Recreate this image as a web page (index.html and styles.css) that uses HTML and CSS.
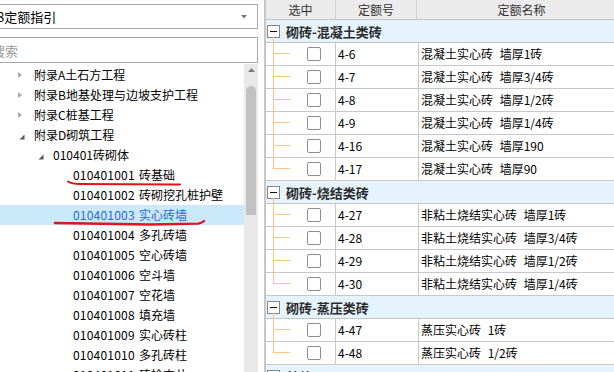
FILE: index.html
```html
<!DOCTYPE html>
<html lang="zh-CN">
<head>
    <meta charset="UTF-8">
    <meta name="viewport" content="width=device-width, initial-scale=1.0">
    <link rel="stylesheet" href="styles.css">
    <title>定额指引</title>
</head>
<body>
<div class="app">
    <aside class="guide">
        <div class="select">
            <span>8定额指引</span>
            <svg class="caret" width="6" height="4" viewBox="0 0 6 4"><path d="M0 0H6L3 3.5Z" fill="#777"/></svg>
        </div>
        <div class="search"><span>搜索</span></div>

        <div class="tree-wrap">
            <ul class="tree">
                <li class="node lv1"><span class="tg"><svg width="6" height="8" viewBox="0 0 6 8"><path d="M1 1L5 4L1 7Z" fill="#a9a9a9"/></svg></span>附录A土石方工程</li>
                <li class="node lv1"><span class="tg"><svg width="6" height="8" viewBox="0 0 6 8"><path d="M1 1L5 4L1 7Z" fill="#a9a9a9"/></svg></span>附录B地基处理与边坡支护工程</li>
                <li class="node lv1"><span class="tg"><svg width="6" height="8" viewBox="0 0 6 8"><path d="M1 1L5 4L1 7Z" fill="#a9a9a9"/></svg></span>附录C桩基工程</li>
                <li class="node lv1"><span class="tg open"><svg width="6" height="6" viewBox="0 0 6 6"><path d="M5.5 0.5V5.5H0.5Z" fill="#595959"/></svg></span>附录D砌筑工程</li>
                <li class="node lv2"><span class="tg open"><svg width="6" height="6" viewBox="0 0 6 6"><path d="M5.5 0.5V5.5H0.5Z" fill="#595959"/></svg></span>010401砖砌体</li>
                <li class="node lv3"><span class="code">010401001</span>砖基础</li>
                <li class="node lv3"><span class="code">010401002</span>砖砌挖孔桩护壁</li>
                <li class="node lv3 active"><span class="code">010401003</span>实心砖墙</li>
                <li class="node lv3"><span class="code">010401004</span>多孔砖墙</li>
                <li class="node lv3"><span class="code">010401005</span>空心砖墙</li>
                <li class="node lv3"><span class="code">010401006</span>空斗墙</li>
                <li class="node lv3"><span class="code">010401007</span>空花墙</li>
                <li class="node lv3"><span class="code">010401008</span>填充墙</li>
                <li class="node lv3"><span class="code">010401009</span>实心砖柱</li>
                <li class="node lv3"><span class="code">010401010</span>多孔砖柱</li>
                <li class="node lv3"><span class="code">010401011</span>砖检查井</li>
                <li class="node lv3"><span class="code">010401012</span>零星砌砖</li>
            </ul>
            <div class="vscroll">
                <svg class="up" width="7" height="4" viewBox="0 0 7 4"><path d="M3.5 0L7 4H0Z" fill="#7a7a7a"/></svg>
                <div class="thumb"></div>
            </div>
            <!-- hand drawn red marks -->
            <svg class="marks" width="258" height="308" viewBox="0 64 258 308">
                <path d="M68 181.5Q72 184 80 184L180 184.5" fill="none" stroke="#e5121b" stroke-width="2" stroke-linecap="round"/>
                <path d="M55 223L150 224.5L198 223.6Q202 223 204 221" fill="none" stroke="#e5121b" stroke-width="2.4" stroke-linecap="round"/>
            </svg>
        </div>
    </aside>

    <section class="quota">
        <div class="grid-head">
            <div class="c-pick">选中</div>
            <div class="c-no">定额号</div>
            <div class="c-name">定额名称</div>
        </div>

        <div class="group"><span class="minus"></span>砌砖-混凝土类砖</div>
        <div class="row"><div class="c-pick"><span class="chk"></span></div><div class="c-no">4-6</div><div class="c-name">混凝土实心砖 墙厚1砖</div></div>
        <div class="row"><div class="c-pick"><span class="chk"></span></div><div class="c-no">4-7</div><div class="c-name">混凝土实心砖 墙厚3/4砖</div></div>
        <div class="row"><div class="c-pick"><span class="chk"></span></div><div class="c-no">4-8</div><div class="c-name">混凝土实心砖 墙厚1/2砖</div></div>
        <div class="row"><div class="c-pick"><span class="chk"></span></div><div class="c-no">4-9</div><div class="c-name">混凝土实心砖 墙厚1/4砖</div></div>
        <div class="row"><div class="c-pick"><span class="chk"></span></div><div class="c-no">4-16</div><div class="c-name">混凝土实心砖 墙厚190</div></div>
        <div class="row last"><div class="c-pick"><span class="chk"></span></div><div class="c-no">4-17</div><div class="c-name">混凝土实心砖 墙厚90</div></div>

        <div class="group"><span class="minus"></span>砌砖-烧结类砖</div>
        <div class="row"><div class="c-pick"><span class="chk"></span></div><div class="c-no">4-27</div><div class="c-name">非粘土烧结实心砖 墙厚1砖</div></div>
        <div class="row"><div class="c-pick"><span class="chk"></span></div><div class="c-no">4-28</div><div class="c-name">非粘土烧结实心砖 墙厚3/4砖</div></div>
        <div class="row"><div class="c-pick"><span class="chk"></span></div><div class="c-no">4-29</div><div class="c-name">非粘土烧结实心砖 墙厚1/2砖</div></div>
        <div class="row last"><div class="c-pick"><span class="chk"></span></div><div class="c-no">4-30</div><div class="c-name">非粘土烧结实心砖 墙厚1/4砖</div></div>

        <div class="group"><span class="minus"></span>砌砖-蒸压类砖</div>
        <div class="row"><div class="c-pick"><span class="chk"></span></div><div class="c-no">4-47</div><div class="c-name">蒸压实心砖 1砖</div></div>
        <div class="row last"><div class="c-pick"><span class="chk"></span></div><div class="c-no">4-48</div><div class="c-name">蒸压实心砖 1/2砖</div></div>

        <div class="group"><span class="minus"></span>其他</div>
    </section>
</div>
</body>
</html>
```

FILE: styles.css
```css
html, body {
    margin: 0;
    padding: 0;
}

body {
    width: 614px;
    height: 372px;
    overflow: hidden;
    background: #fff;
    font-family: "Noto Sans CJK SC", "DejaVu Sans", sans-serif;
    font-size: 12px;
    color: #000;
}

.app {
    display: flex;
    height: 372px;
}

/* left: guide tree */
.guide {
    flex: 0 0 258px;
    margin-right: 6px;
    display: flex;
    flex-direction: column;
}

.select {
    box-sizing: border-box;
    width: 270px;
    height: 25px;
    margin: 4px 0 0 -12px;
    border: 1px solid #a9a9a9;
    padding: 0 8px 0 8px;
    display: flex;
    align-items: center;
    justify-content: space-between;
    font-size: 13px;
}

.caret {
    margin-right: 2px;
}

.search {
    box-sizing: border-box;
    width: 270px;
    height: 26px;
    margin: 8px 0 0 -12px;
    border: 1px solid #a9a9a9;
    padding-left: 3px;
    display: flex;
    align-items: center;
    color: #9a9a9a;
    font-size: 13px;
}

.tree-wrap {
    flex: 1;
    margin-top: 1px;
    display: flex;
    position: relative;
    overflow: hidden;
}

.tree {
    list-style: none;
    margin: 0;
    padding: 1px 0 0 0;
    flex: 0 0 244px;
}

.node {
    height: 20px;
    line-height: 20px;
    display: flex;
    align-items: center;
    white-space: nowrap;
}

.lv1 { padding-left: 16px; }
.lv2 { padding-left: 35px; }
.lv3 { padding-left: 73px; }

.tg {
    width: 18px;
    height: 20px;
    display: flex;
    align-items: center;
}

.tg svg { margin-left: 1px; }
.tg.open svg { margin-left: 3px; margin-top: 3px; }

.code {
    width: 66px;
    flex: 0 0 66px;
    letter-spacing: 0.2px;
}

.node.active {
    background: #cce8fb;
    color: #1a6ed8;
}

.vscroll {
    flex: 0 0 14px;
    background: #e8e8e8;
    display: flex;
    flex-direction: column;
    align-items: center;
}

.up {
    margin-top: 4px;
}

.thumb {
    width: 10px;
    height: 129px;
    margin-top: 14px;
    border-radius: 5px 5px 0 0;
    background: #c2c2c2;
}

.marks {
    position: absolute;
    left: 0;
    top: 0;
    pointer-events: none;
}

/* right: quota grid */
.quota {
    flex: 1;
    border-left: 2px solid #c6c6c6;
    overflow: hidden;
}

.grid-head, .row {
    display: flex;
    width: 360px;
}

.grid-head {
    height: 19px;
    line-height: 19px;
    background: #ebebeb;
    border-bottom: 1px solid #c4c4c4;
    color: #333;
    text-align: center;
}

.c-pick {
    flex: 0 0 69px;
    border-right: 1px solid #d2d2d2;
    position: relative;
}

.c-no {
    flex: 0 0 80px;
    border-right: 1px solid #d2d2d2;
}

.c-name {
    flex: 1;
}

.row {
    height: 22px;
    line-height: 22px;
    border-bottom: 1px solid #c8c8c8;
}

.row .c-pick, .row .c-no {
    border-right-color: #c8c8c8;
}

.row .c-no, .row .c-name {
    padding-left: 2px;
}

.row .c-name {
    word-spacing: 4px;
}

.row .c-pick {
    display: flex;
    align-items: center;
}

/* tree connector lines */
.row .c-pick::before {
    content: "";
    position: absolute;
    left: 7px;
    top: 0;
    bottom: -1px;
    width: 1px;
    background: #f9c981;
}

.row.last .c-pick::before {
    bottom: auto;
    height: 11px;
}

.row .c-pick::after {
    content: "";
    position: absolute;
    left: 7px;
    top: 10px;
    width: 17px;
    height: 1px;
    background: #f9c981;
}

.chk {
    box-sizing: border-box;
    width: 14px;
    height: 14px;
    margin-left: 41px;
    border: 1px solid #8e8e8e;
    border-radius: 2px;
    background: #fff;
}

.group {
    height: 22px;
    border-bottom: 1px solid #c4c4c4;
    background: #e5f3fd;
    display: flex;
    align-items: center;
    font-weight: bold;
    color: #2b2b2b;
    font-size: 13px;
    position: relative;
}

.group::after {
    content: "";
    position: absolute;
    left: 7px;
    top: 17px;
    bottom: -1px;
    width: 1px;
    background: #f9c981;
}

.minus {
    box-sizing: border-box;
    width: 13px;
    height: 13px;
    margin: 0 6px 0 1px;
    border: 1px solid #858585;
    background: #fff;
    position: relative;
}

.minus::before {
    content: "";
    position: absolute;
    left: 2px;
    right: 2px;
    top: 5px;
    height: 1px;
    background: #111;
}
```
